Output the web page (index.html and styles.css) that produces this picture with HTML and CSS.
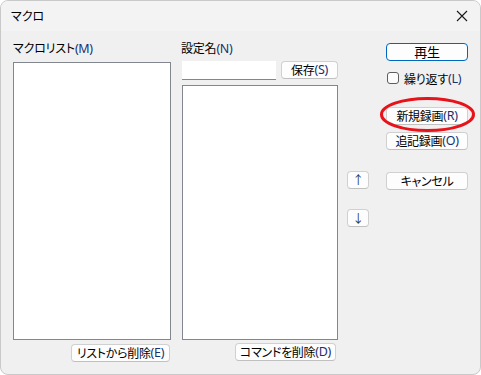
FILE: index.html
```html
<!DOCTYPE html>
<html lang="ja">
<head>
<meta charset="utf-8">
<link rel="stylesheet" href="styles.css">
</head>
<body>
<div class="window">
  <div class="titlebar">
    <span class="title">マクロ</span>
    <svg class="close" width="12" height="12" viewBox="0 0 12 12"><path d="M1 1L11 11M11 1L1 11" stroke="#1a1a1a" stroke-width="1.1" fill="none"/></svg>
  </div>
  <div class="content">
    <div class="col col1">
      <div class="label">マクロリスト<span class="mn">(M)</span></div>
      <div class="listbox lb1"></div>
      <button class="btn btn-del-list">リストから削除<span class="mn">(E)</span></button>
    </div>
    <div class="col col2">
      <div class="label">設定名<span class="mn">(N)</span></div>
      <div class="row">
        <div class="input"></div>
        <button class="btn btn-save">保存<span class="mn">(S)</span></button>
      </div>
      <div class="listbox lb2"></div>
      <button class="btn btn-del-cmd">コマンドを削除<span class="mn">(D)</span></button>
    </div>
    <div class="col col3">
      <button class="btn arrow up">↑</button>
      <button class="btn arrow down">↓</button>
    </div>
    <div class="col col4">
      <button class="btn default b-play">再生</button>
      <label class="check"><span class="box"></span>繰り返す<span class="mn">(L)</span></label>
      <button class="btn b-new">新規録画<span class="mn">(R)</span></button>
      <button class="btn b-add">追記録画<span class="mn">(O)</span></button>
      <button class="btn b-cancel">キャンセル</button>
    </div>
  </div>
  <svg class="circle" width="97" height="37" viewBox="0 0 97 37"><ellipse cx="48.5" cy="18.5" rx="46" ry="16" fill="none" stroke="#e8121a" stroke-width="3"/></svg>
</div>
</body>
</html>
```
FILE: styles.css
```css
html, body { margin: 0; padding: 0; background: #ffffff; }
body { width: 481px; height: 375px; overflow: hidden; font-family: "Noto Sans CJK JP", "Noto Sans", sans-serif; font-size: 12px; color: #000; }
.window { position: relative; box-sizing: border-box; width: 481px; height: 375px; border: 1px solid #c9c9c9; border-radius: 8px; background: #f0f0f0; overflow: hidden; }
.titlebar { height: 30px; background: #f3f3f3; display: flex; align-items: center; justify-content: space-between; padding: 0 12px 0 10px; box-sizing: border-box; }
.title { font-size: 12px; font-feature-settings: "palt"; line-height: 16px; }
.close { display: block; }
.content { display: flex; padding: 9px 0 0 12px; align-items: flex-start; }
.col { display: flex; flex-direction: column; }
.label { line-height: 16px; height: 16px; font-feature-settings: "palt"; letter-spacing: -0.2px; }
.mn { color: #1a3070; font-family: "Noto Sans", sans-serif; font-size: 12.5px; letter-spacing: -0.3px; }
.listbox { background: #fff; border: 1px solid #82878f; box-sizing: border-box; }
.col1 { width: 158px; }
.lb1 { margin-top: 6px; width: 158px; height: 278px; }
.btn { font-family: inherit; font-size: 12px; font-feature-settings: "palt"; letter-spacing: -0.3px; background: #fdfdfd; border: 1px solid #d0d0d0; border-bottom-color: #c0c0c0; border-radius: 4px; box-sizing: border-box; height: 18px; padding: 0; margin: 0; display: flex; align-items: center; justify-content: center; line-height: 14px; color: #000; }
.btn-del-list { margin-top: 4px; align-self: flex-end; width: 99px; margin-right: 1px; }
.col2 { margin-left: 10px; width: 157px; }
.row { display: flex; margin-top: 5px; }
.input { margin-left: 1px; width: 94px; height: 19px; background: #fff; border-bottom: 1px solid #868686; box-sizing: border-box; }
.btn-save { margin-left: 5px; width: 57px; }
.lb2 { margin-top: 5px; margin-left: 1px; width: 156px; height: 255px; }
.btn-del-cmd { margin-top: 3px; align-self: flex-end; width: 101px; margin-right: 2px; }
.col3 { margin-left: 9px; width: 22px; }
.arrow { width: 22px; height: 18px; color: #1e3a5a; font-size: 12px; }
.up { margin-top: 131px; }
.down { margin-top: 20px; }
.col4 { margin-left: 17px; width: 82px; }
.default { border: 1px solid #0067c0; font-size: 13px; }
.b-play { margin-top: 3px; width: 82px; }
.check { display: flex; align-items: center; margin-top: 10px; height: 14px; font-feature-settings: "palt"; letter-spacing: -0.2px; }
.box { width: 12px; height: 12px; border: 1px solid #5d5d5d; border-radius: 3px; box-sizing: border-box; background: #fbfbfb; margin: 0 5px 0 1px; }
.b-new { margin-top: 22px; width: 82px; }
.b-add { margin-top: 7px; width: 82px; }
.b-cancel { margin-top: 22px; width: 82px; }
.circle { position: absolute; left: 378px; top: 95px; }
```
